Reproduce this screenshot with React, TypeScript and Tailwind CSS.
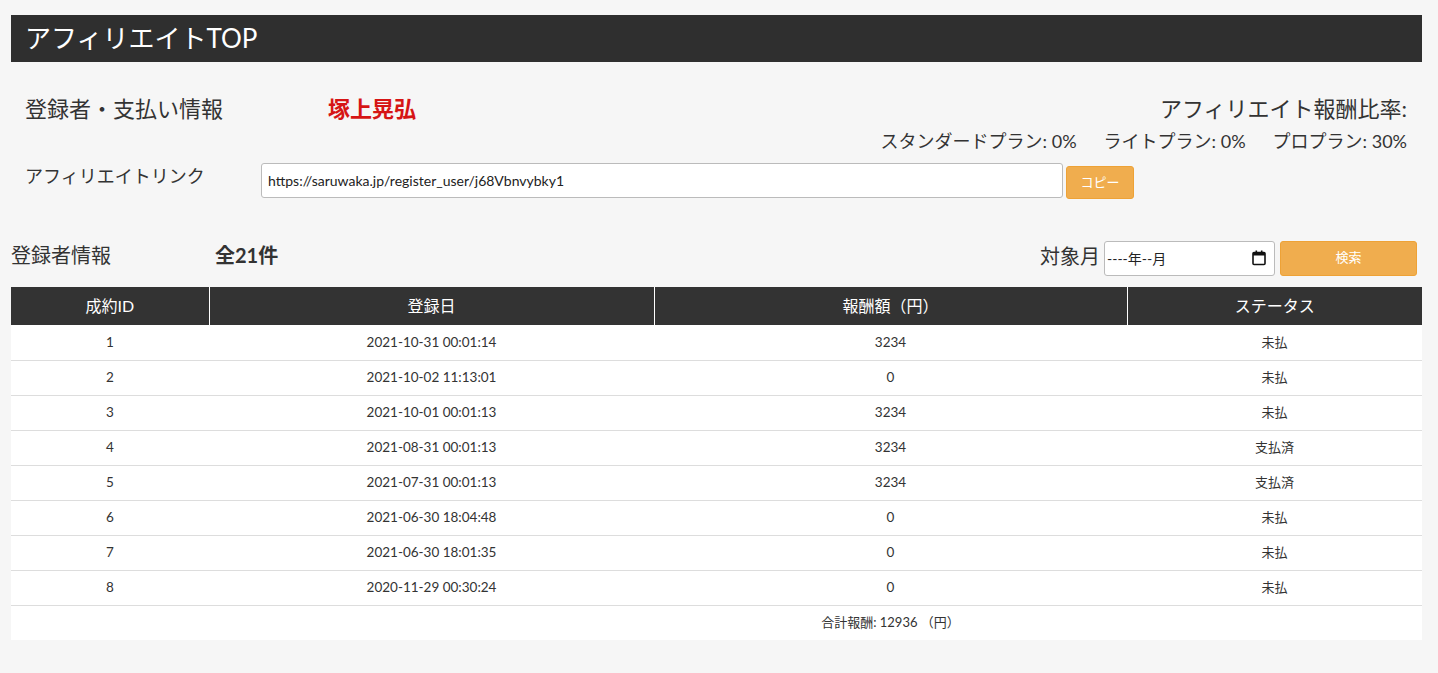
import React from 'react';

interface Row {
  id: number;
  date: string;
  amount: number;
  status: string;
}

const rows: Row[] = [
  { id: 1, date: '2021-10-31 00:01:14', amount: 3234, status: '未払' },
  { id: 2, date: '2021-10-02 11:13:01', amount: 0, status: '未払' },
  { id: 3, date: '2021-10-01 00:01:13', amount: 3234, status: '未払' },
  { id: 4, date: '2021-08-31 00:01:13', amount: 3234, status: '支払済' },
  { id: 5, date: '2021-07-31 00:01:13', amount: 3234, status: '支払済' },
  { id: 6, date: '2021-06-30 18:04:48', amount: 0, status: '未払' },
  { id: 7, date: '2021-06-30 18:01:35', amount: 0, status: '未払' },
  { id: 8, date: '2020-11-29 00:30:24', amount: 0, status: '未払' },
];

function CalendarIcon() {
  return (
    <svg width="14" height="16" viewBox="0 0 14 16" fill="none">
      <rect x="1" y="2.5" width="12" height="12" rx="1" stroke="#111" strokeWidth="1.6" />
      <rect x="1" y="2.5" width="12" height="3" fill="#111" />
      <rect x="3.5" y="0.5" width="1.6" height="3" fill="#111" />
      <rect x="8.9" y="0.5" width="1.6" height="3" fill="#111" />
    </svg>
  );
}

export default function App() {
  const total = rows.reduce((s, r) => s + r.amount, 0);

  return (
    <div className="min-h-[673px] bg-[#f6f6f6] pt-[15px] text-[#333] font-['Lato','Noto_Sans_CJK_JP',sans-serif]">
      <div className="ml-[11px] w-[1411px]">
        <header className="h-[47px] bg-[#2f2f2f] px-[14px] flex items-center">
          <h1 className="text-[26px] text-white font-normal">アフィリエイトTOP</h1>
        </header>

        <section className="pl-[14px] pr-[15px] pt-[31px]">
          <div className="flex items-center h-[30px]">
            <div className="w-[303px] text-[22px]">登録者・支払い情報</div>
            <div className="text-[22px] font-bold text-[#d61515]">塚上晃弘</div>
            <div className="flex-1 text-right text-[22px]">アフィリエイト報酬比率:</div>
          </div>
          <div className="flex justify-end gap-[27px] h-[36px] items-center text-[18px]">
            <span>スタンダードプラン: 0%</span>
            <span>ライトプラン: 0%</span>
            <span>プロプラン: 30%</span>
          </div>
          <div className="flex items-start mt-[4px]">
            <div className="w-[236px] text-[18px]">アフィリエイトリンク</div>
            <input
              type="text"
              readOnly
              value="https://saruwaka.jp/register_user/j68Vbnvybky1"
              className="w-[802px] h-[35px] bg-white border border-[#bbb] rounded-[3px] px-[6px] text-[14px] text-[#222] outline-none"
            />
            <button className="ml-[3px] mt-[3px] w-[68px] h-[33px] bg-[#f0ad4e] border border-[#eea236] rounded-[3px] text-white text-[13px]">
              コピー
            </button>
          </div>
        </section>

        <div className="flex items-center mt-[41px] h-[36px]">
          <div className="w-[204px] text-[20px] mb-[7px]">登録者情報</div>
          <div className="text-[20px] font-bold mb-[7px]">全21件</div>
          <div className="flex-1 flex justify-end items-center">
            <span className="text-[20px] mr-[4px] mb-[5px]">対象月</span>
            <div className="w-[171px] h-[35px] bg-white border border-[#bbb] rounded-[3px] pl-[2px] pr-[8px] flex items-center justify-between text-[14px] text-[#222]">
              <span>----年--月</span>
              <CalendarIcon />
            </div>
            <button className="ml-[5px] mr-[5px] w-[137px] h-[35px] bg-[#f0ad4e] border border-[#eea236] rounded-[3px] text-white text-[13px]">
              検索
            </button>
          </div>
        </div>

        <table className="mt-[11px] w-[1411px] border-collapse table-fixed bg-white text-[13.5px]">
          <colgroup>
            <col className="w-[198px]" />
            <col className="w-[445px]" />
            <col className="w-[473px]" />
            <col className="w-[295px]" />
          </colgroup>
          <thead>
            <tr className="bg-[#333] text-white text-[16px] h-[38px]">
              <th className="font-normal border-r border-white">成約ID</th>
              <th className="font-normal border-r border-white">登録日</th>
              <th className="font-normal border-r border-white">報酬額（円）</th>
              <th className="font-normal">ステータス</th>
            </tr>
          </thead>
          <tbody>
            {rows.map((r) => (
              <tr key={r.id} className="h-[35px] border-b border-[#ddd] text-center">
                <td>{r.id}</td>
                <td>{r.date}</td>
                <td>{r.amount}</td>
                <td className="text-[13px]">{r.status}</td>
              </tr>
            ))}
            <tr className="h-[35px] text-center text-[13px]">
              <td></td>
              <td></td>
              <td>合計報酬: {total} （円）</td>
              <td></td>
            </tr>
          </tbody>
        </table>
      </div>
    </div>
  );
}
